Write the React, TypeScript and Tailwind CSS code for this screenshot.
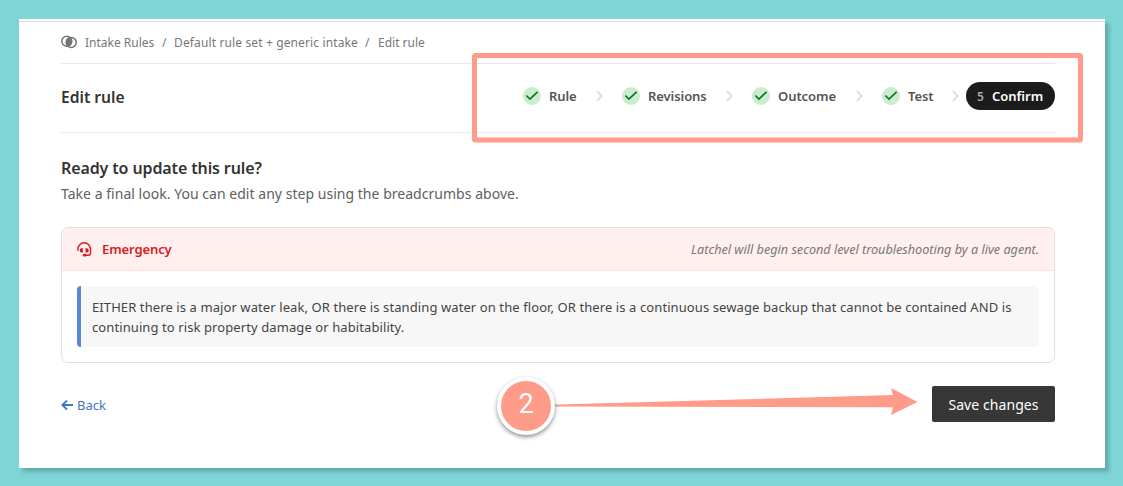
import React from "react";

const sans = "font-['Noto_Sans','Open_Sans',sans-serif]";

const steps = [
  { label: "Rule", width: "w-[28px]" },
  { label: "Revisions", width: "w-[59px]" },
  { label: "Outcome", width: "w-[59px]" },
  { label: "Test", width: "w-[25px]" },
];

function CirclesIcon() {
  return (
    <svg className="-mt-px mr-px h-[14px] w-[16px]" viewBox="0 0 16 14" fill="none">
      <circle cx="5.8" cy="6.2" r="5" stroke="#747474" strokeWidth="1.5" />
      <circle cx="10.2" cy="7.4" r="5" stroke="#747474" strokeWidth="1.5" />
      <path d="M9 2.4c2.6 2.6 2.4 6.600-1.600 8.900-2.800-2.700-2.600-6.700 1.600-8.900Z" fill="#747474" stroke="#747474" strokeWidth="1.3" />
    </svg>
  );
}

function HeadsetIcon() {
  return (
    <svg className="h-[15px] w-[15px]" viewBox="0 0 15 15" fill="none">
      <path d="M.9 8.800V7.100a6.200 6.200 0 0 1 12.600 0v4.100a2 2 0 0 1-2 2H8" stroke="#d41d25" strokeWidth="1.4" />
      <path d="M2.700 8.300a2.100 2.100 0 0 1 2.300-2.100h.9v4.300H5a2.100 2.100 0 0 1-2.300-2.200ZM11.700 8.300a2.100 2.100 0 0 0-2.300-2.100h-.9v4.300h.9a2.100 2.100 0 0 0 2.300-2.200Z" fill="#d41d25" />
      <rect x="5.800" y="11.800" width="3.600" height="2.700" rx="1.200" fill="#d41d25" />
    </svg>
  );
}

export default function App() {
  return (
    <div className={`relative h-[486px] w-[1123px] overflow-hidden bg-[#7dd5d5] p-[19px] pr-[18px] ${sans}`}>
      <main className="flex h-[449px] w-[1086px] flex-col bg-white px-[42px] pr-[50px] shadow-[4px_4px_4px_rgba(0,0,0,0.2)]">
        <div className="-mr-[50px] -ml-[42px] mt-[2px] h-px shrink-0 bg-[#dedede]" />
        <nav className="flex h-[42px] shrink-0 items-center border-b border-[#e8e8e8] text-[12px] whitespace-nowrap text-[#777]">
          <CirclesIcon />
          <span className="ml-[7px] w-[70px]">Intake Rules</span>
          <span className="ml-[7px] w-[6px]">/</span>
          <span className="ml-[6px] w-[184px] tracking-[0.13px]">Default rule set + generic intake</span>
          <span className="ml-[7px] w-[6px]">/</span>
          <span className="ml-[7px]">Edit rule</span>
        </nav>
        <header className="flex h-[69px] shrink-0 items-center border-b border-[#e8e8e8]">
          <h1 className="pb-px text-[15.6px] font-semibold text-[#333]">Edit rule</h1>
          <ol className="ml-auto flex items-center pb-[5px] text-[13px] font-semibold whitespace-nowrap text-[#555]">
            {steps.map((s) => (
              <li key={s.label} className="flex items-center">
                <svg className="h-[18px] w-[18px]" viewBox="0 0 18 18" fill="none">
                  <circle cx="9" cy="9" r="9" fill="#c9edcf" />
                  <path d="m3.4 8.5 3.5 3.5L14.6 4.8" stroke="#16701f" strokeWidth="1.7" />
                </svg>
                <span className={`ml-[8px] pt-[2px] tracking-[-0.07px] ${s.width}`}>{s.label}</span>
                <svg className="mt-px mr-[19px] ml-[19px] h-[12px] w-[7px]" viewBox="0 0 7 12" fill="none">
                  <path d="m1 1 4.7 5L1 11" stroke="#dedede" strokeWidth="1.9" />
                </svg>
              </li>
            ))}
            <li className="-ml-[12px] flex h-[28px] w-[89px] items-center rounded-full bg-[#1b1b1b] pt-[2px] pl-[11px]">
              <span className="w-[15px] text-[12px] text-[#aaa]">5</span>
              <span className="text-white">Confirm</span>
            </li>
          </ol>
        </header>
        <h2 className="mt-[23px] h-[24px] shrink-0 text-[16px] leading-[24px] font-semibold tracking-[-0.12px] text-[#333]">Ready to update this rule?</h2>
        <p className="h-[28px] shrink-0 text-[14px] leading-[28px] tracking-[0.03px] whitespace-nowrap text-[#606060]">Take a final look. You can edit any step using the breadcrumbs above.</p>
        <section className="mt-[19px] h-[136px] shrink-0 overflow-hidden rounded-[7px] border border-[#e0e0e0]">
          <div className="flex h-[43px] items-center border-b border-[#fbe2e2] bg-[#ffefee] px-[15px] text-[13px]">
            <HeadsetIcon />
            <strong className="ml-[10px] pt-[2px] font-semibold tracking-[-0.1px] text-[#d41d25]">Emergency</strong>
            <em className="ml-auto text-[12.65px] whitespace-nowrap text-[#777]">Latchel will begin second level troubleshooting by a live agent.</em>
          </div>
          <div className="mx-[15px] mt-[15px] h-[61px] rounded-[4px] border-l-4 border-[#5689d3] bg-[#f7f7f7] pt-[11px] pl-[11px] text-[13px] leading-[20px] tracking-[0.093px] whitespace-nowrap text-[#444]">
            EITHER there is a major water leak, OR there is standing water on the floor, OR there is a continuous sewage backup that cannot be contained AND is
            <br />
            continuing to risk property damage or habitability.
          </div>
        </section>
        <footer className="mt-[23px] flex h-[36px] shrink-0 items-center justify-between">
          <a className="flex items-center pt-[3px] text-[13px] text-[#3f76c4]">
            <svg className="mr-[4px] h-[11px] w-[12px]" viewBox="0 0 12 11" fill="none">
              <path d="M12 5H1.5M6 .5 1.3 5 6 9.5" stroke="#3f76c4" strokeWidth="1.8" />
            </svg>
            Back
          </a>
          <button className="h-[36px] w-[123px] rounded-[2px] bg-[#373737] text-[14px] tracking-[0.08px] whitespace-nowrap text-white">Save changes</button>
        </footer>
      </main>
      <svg className="pointer-events-none absolute inset-0 h-[486px] w-[1123px]" viewBox="0 0 1123 486" fill="none">
        <rect x="474.5" y="55.5" width="606" height="84.5" rx="1" stroke="#ff9b89" strokeWidth="5" />
        <path d="M550 404.7 893 395 891 388 917.5 402 891 415 893 407.3 550 406.5Z" fill="#ff9b89" />
      </svg>
      <div className="absolute top-[377px] left-[497px] flex h-[58px] w-[58px] items-center justify-center rounded-full border-4 border-white bg-[#ff9b89] pb-[4px] font-['Roboto',sans-serif] text-[27px] text-white shadow-[0_2px_4px_rgba(0,0,0,0.45)]">2</div>
    </div>
  );
}
